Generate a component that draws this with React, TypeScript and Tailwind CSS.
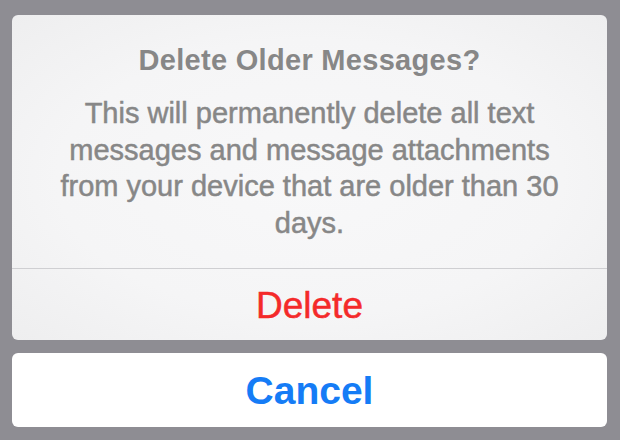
export default function App() {
  return (
    <div
      className="flex h-[440px] w-full flex-col bg-[#8e8d93] pt-[15px] pl-[12px] pr-[13px]"
      style={{ fontFamily: '"Liberation Sans", Arial, sans-serif' }}
    >
      {/* alert sheet */}
      <div className="flex flex-col overflow-hidden rounded-[6px] bg-[radial-gradient(ellipse_at_center,#f8f8f9_0%,#f5f5f6_60%,#eeeeef_100%)]">
        <div className="px-[40px] pt-[28px] pb-[27px] text-center text-[#878787]">
          <h1 className="text-[29px] leading-[34px] font-bold tracking-[0.3px]">Delete Older Messages?</h1>
          <p className="mt-[18px] text-[29px] leading-[36.5px] [-webkit-text-stroke:0.5px_currentColor]">
            This will permanently delete all text messages and message attachments from your device that are older than 30 days.
          </p>
        </div>
        <div className="h-px bg-[#cfcfd2]" />
        <button className="h-[71px] pt-[3px] text-center text-[37px] leading-[68px] text-[#f42a2a] [-webkit-text-stroke:0.5px_currentColor]">
          Delete
        </button>
      </div>

      <button className="mt-[13px] h-[74px] rounded-[6px] bg-white pt-[2px] text-center text-[39px] leading-[72px] font-bold text-[#157cf6]">
        Cancel
      </button>
    </div>
  );
}
